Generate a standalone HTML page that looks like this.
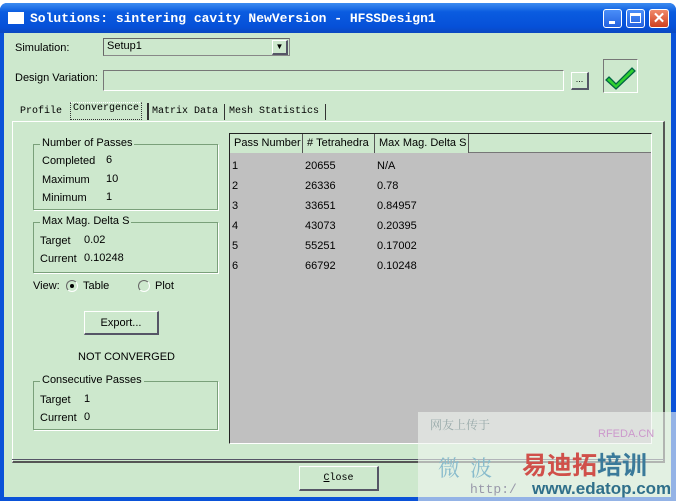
<!DOCTYPE html>
<html><head><style>
body{margin:0;width:676px;height:501px;background:#fff;position:relative;overflow:hidden;font-family:"Liberation Sans",sans-serif;font-size:11px;color:#000}
.a{position:absolute;white-space:nowrap}
.win{left:0;top:3px;width:676px;height:498px;background:#0a52d8;border-radius:7px 7px 0 0}
.title{left:0;top:3px;width:676px;height:30px;border-radius:7px 7px 0 0;background:linear-gradient(#3d8cf0,#0a5ce0 30%,#0650d8 80%,#0a48c0)}
.body{left:4px;top:33px;width:667px;height:464px;background:#cde8cd}
.tt{font-family:"Liberation Mono",monospace;font-weight:bold;color:#fff;font-size:13px;left:30px;top:11px;letter-spacing:0}
.tb{top:9px;width:19px;height:19px;border:1px solid #fff;border-radius:3px;background:linear-gradient(#4a8ef8,#2462e0);box-sizing:border-box}
.grp{border:1px solid #7aa07a;box-shadow:1px 1px 0 #fff}
.lg{background:#cde8cd;padding:0 2px;top:-8px;left:6px}
.tab{font-family:"Liberation Mono",monospace;font-size:10px;top:106px}
.th{top:134px;height:19px;border-right:1px solid #555;background:#cde8cd;line-height:19px;padding-left:4px;box-sizing:border-box;overflow:hidden}
.btn{border:1px solid #fff;border-right:2px solid #556;border-bottom:2px solid #556;background:#cde8cd;text-align:center;box-sizing:border-box}
</style></head><body>
<div class="a win"></div>
<div class="a title"></div>
<div class="a" style="left:8px;top:12px;width:16px;height:12px;background:#fff"></div>
<div class="a tt">Solutions: sintering cavity NewVersion - HFSSDesign1</div>
<div class="a tb" style="left:603px"><div class="a" style="left:5px;top:11px;width:6px;height:3px;background:#fff"></div></div>
<div class="a tb" style="left:626px"><div class="a" style="left:3px;top:3px;width:11px;height:10px;border:1px solid #fff;border-top-width:3px;box-sizing:border-box"></div></div>
<div class="a tb" style="left:649px;width:20px;background:linear-gradient(#f08a6a,#d04020);color:#fff;font-weight:bold;font-size:15px;text-align:center;line-height:17px">✕</div>
<div class="a body"></div>

<div class="a" style="left:15px;top:42px">Simulation:</div>
<div class="a" style="left:103px;top:38px;width:187px;height:18px;border:1px solid #888;border-top-color:#666;border-left-color:#666;background:#cde8cd;box-sizing:border-box;padding:1px 3px">Setup1</div>
<div class="a btn" style="left:272px;top:40px;width:16px;height:15px;font-size:8px;line-height:12px">▼</div>
<div class="a" style="left:15px;top:72px">Design Variation:</div>
<div class="a" style="left:103px;top:70px;width:461px;height:21px;border:1px solid #777;border-bottom-color:#fff;border-right-color:#fff;box-sizing:border-box"></div>
<div class="a btn" style="left:571px;top:72px;width:18px;height:18px;font-size:9px;line-height:12px">...</div>
<div class="a" style="left:603px;top:59px;width:35px;height:34px;border:1px solid #777;border-right-color:#fff;border-bottom-color:#fff;box-sizing:border-box">
<svg width="33" height="32" viewBox="0 0 33 32"><path d="M5 17 L12 24 L28 8 L31 11 L12 29 L2 20 Z" fill="#2fd02f" stroke="#064" stroke-width="1.3"/></svg></div>

<div class="a tab" style="left:20px">Profile</div>
<div class="a tab" style="left:70px;top:102px;height:16px;border:1px dotted #333;padding:0 2px;border-top-color:#fff">Convergence</div>
<div class="a" style="left:147px;top:103px;width:2px;height:17px;background:#333"></div>
<div class="a tab" style="left:152px">Matrix Data</div>
<div class="a" style="left:224px;top:104px;width:1px;height:16px;background:#333"></div>
<div class="a tab" style="left:229px">Mesh Statistics</div>
<div class="a" style="left:325px;top:104px;width:1px;height:16px;background:#333"></div>
<div class="a" style="left:12px;top:121px;width:653px;height:342px;border:1px solid #fff;border-right:2px solid #555;border-bottom:2px solid #555;box-sizing:border-box"></div>

<div class="a grp" style="left:33px;top:144px;width:183px;height:64px">
<div class="a lg">Number of Passes</div>
<div class="a" style="left:8px;top:10px">Completed</div><div class="a" style="left:72px;top:9px">6</div>
<div class="a" style="left:8px;top:29px">Maximum</div><div class="a" style="left:72px;top:28px">10</div>
<div class="a" style="left:8px;top:47px">Minimum</div><div class="a" style="left:72px;top:46px">1</div>
</div>
<div class="a grp" style="left:33px;top:222px;width:183px;height:49px">
<div class="a lg">Max Mag. Delta S</div>
<div class="a" style="left:6px;top:12px">Target</div><div class="a" style="left:50px;top:11px">0.02</div>
<div class="a" style="left:6px;top:30px">Current</div><div class="a" style="left:50px;top:29px">0.10248</div>
</div>
<div class="a" style="left:33px;top:280px">View:</div>
<div class="a" style="left:66px;top:280px;width:10px;height:10px;border-radius:50%;border:1px solid #666;border-right-color:#fff;border-bottom-color:#fff"><div class="a" style="left:3px;top:3px;width:4px;height:4px;border-radius:50%;background:#000"></div></div>
<div class="a" style="left:83px;top:280px">Table</div>
<div class="a" style="left:138px;top:280px;width:10px;height:10px;border-radius:50%;border:1px solid #666;border-right-color:#fff;border-bottom-color:#fff"></div>
<div class="a" style="left:155px;top:280px">Plot</div>
<div class="a btn" style="left:84px;top:311px;width:75px;height:24px;line-height:22px">Export...</div>
<div class="a" style="left:78px;top:351px">NOT CONVERGED</div>
<div class="a grp" style="left:33px;top:381px;width:183px;height:47px">
<div class="a lg">Consecutive Passes</div>
<div class="a" style="left:6px;top:12px">Target</div><div class="a" style="left:50px;top:11px">1</div>
<div class="a" style="left:6px;top:30px">Current</div><div class="a" style="left:50px;top:29px">0</div>
</div>

<div class="a" style="left:229px;top:133px;width:423px;height:311px;background:#c0c0c0;border:1px solid #222;border-right-color:#fff;border-bottom-color:#fff;box-sizing:border-box"></div>
<div class="a" style="left:230px;top:134px;width:421px;height:19px;background:#cde8cd;border-bottom:1px solid #777;box-sizing:border-box"></div>
<div class="a th" style="left:230px;width:73px">Pass Number</div>
<div class="a th" style="left:303px;width:72px">#&nbsp;Tetrahedra</div>
<div class="a th" style="left:375px;width:94px">Max Mag. Delta S</div>
<div class="a" style="left:232px;top:156px;line-height:20px">1<br>2<br>3<br>4<br>5<br>6</div>
<div class="a" style="left:305px;top:156px;line-height:20px">20655<br>26336<br>33651<br>43073<br>55251<br>66792</div>
<div class="a" style="left:377px;top:156px;line-height:20px">N/A<br>0.78<br>0.84957<br>0.20395<br>0.17002<br>0.10248</div>

<div class="a" style="left:12px;top:459px;width:653px;height:1px;background:#556"></div>
<div class="a btn" style="left:299px;top:466px;width:80px;height:25px;line-height:23px;font-family:'Liberation Mono',monospace;font-size:10px"><u>C</u>lose</div>

<div class="a" style="left:418px;top:412px;width:258px;height:89px;background:rgba(240,245,240,0.6)"></div>
<div class="a" style="left:430px;top:416px;color:#9aa;font-family:'Noto Serif CJK SC',serif;font-size:12px">网友上传于</div>
<div class="a" style="left:598px;top:428px;color:#c9c;font-size:11px">RFEDA.CN</div>
<div class="a" style="left:438px;top:452px;color:#8bc;font-family:'Noto Serif CJK SC',serif;font-size:22px;letter-spacing:10px">微波</div>
<div class="a" style="left:522px;top:450px;color:#d0504a;font-weight:bold;font-family:'Noto Sans CJK SC',sans-serif;font-size:25px;line-height:28px">易迪拓<span style="color:#3a7a9a">培训</span></div>
<div class="a" style="left:470px;top:482px;color:#99a;font-family:'Liberation Mono',monospace;font-size:13px">http:/</div>
<div class="a" style="left:532px;top:479px;color:#2f6f8a;font-weight:bold;font-size:17px">www.edatop.com</div>
</body></html>
